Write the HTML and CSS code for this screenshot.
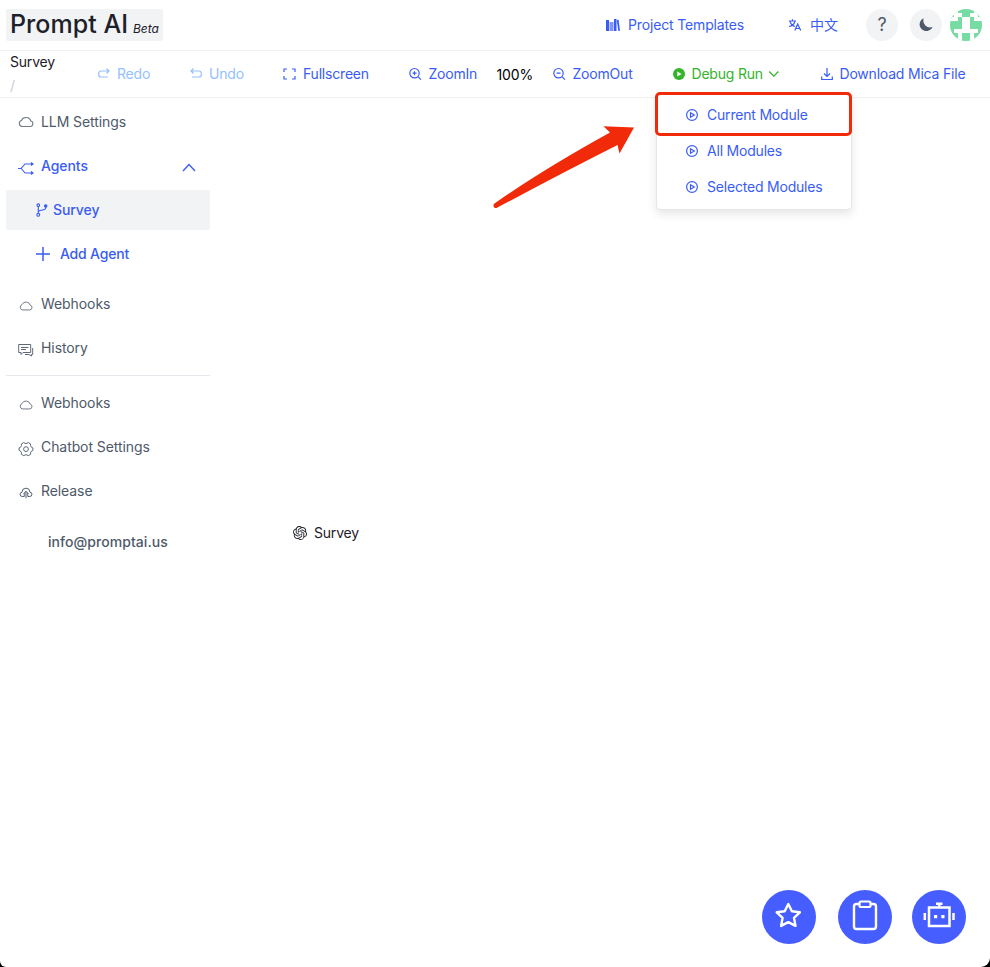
FILE: index.html
```html
<!DOCTYPE html>
<html lang="en">
<head>
<meta charset="utf-8">
<title>Prompt AI</title>
<link rel="stylesheet" href="styles.css">
</head>
<body>
<svg class="defs" aria-hidden="true">
  <symbol id="cloud" viewBox="0 0 16 16"><path d="M4.200 12.500h8a2.800 2.800 0 0 0 .6-5.500A5 5 0 0 0 3.400 6.500 3.100 3.100 0 0 0 4.200 12.500Z"/></symbol>
  <symbol id="play" viewBox="0 0 14 14"><circle cx="7" cy="7" r="5.4"/><path d="M5.5 4.7v4.6L9.3 7Z"/></symbol>
</svg>
<div class="page">
  <header class="header">
    <div class="logo"><span class="name">Prompt AI</span><em>Beta</em></div>
    <nav class="top-nav">
      <a class="templates"><svg width="14" height="14" viewBox="0 0 14 14"><path d="M0 2h3v11H0zM8 1h2.5v12H8z" fill="currentColor"/><path d="M3.5 4h4v9h-4z" fill="currentColor" opacity=".65"/><path d="m10.800 2 1.800-.3L14 12.800l-1.700.2Z" fill="currentColor"/></svg>Project Templates</a>
      <a class="language"><svg width="14" height="14" viewBox="0 0 14 14" class="line"><path d="M1 3h7M4.500 1.300V3M2 3.500c1 3 3 4.500 5 5M7 3.500c-1 3-3 4.500-6 5M6.800 12.500 9.700 6l3 6.500M8 10.500h3.500"/></svg>中文</a>
      <button class="round help">?</button>
      <button class="round moon"><svg width="16" height="16" viewBox="0 0 16 16"><path d="M5.800 1.200A6.700 6.700 0 1 0 14.500 10 6.800 6.800 0 0 1 5.800 1.200Z" fill="currentColor"/></svg></button>
      <svg class="avatar" width="32" height="32" viewBox="0 0 8 8" shape-rendering="crispEdges"><path d="M0 0h8v8H0z" fill="#76dca3"/><path d="M0 0h2v1H0zM6 0h2v1H6zM1 1h2v1H1zM5 1h2v1H5zM0 2h2v1H0zM6 2h2v1H6zM3 2h2v3H3zM1 5h6v1H1zM2 6h1v2H2zM5 6h1v2H5z" fill="#fff"/></svg>
    </nav>
  </header>
  <div class="toolbar">
    <div class="crumb">Survey<span>/</span></div>
    <a class="off"><svg width="12" height="14" viewBox="0 0 12 14" class="line"><path d="M11 4H3a2.300 2.300 0 0 0-2.300 2.300v1.400A2.300 2.300 0 0 0 3 10h7M8.500 1.500 11 4 8.500 6.500"/></svg>Redo</a>
    <a class="off"><svg width="12" height="14" viewBox="0 0 12 14" class="line"><path d="M1 4h8a2.300 2.300 0 0 1 2.300 2.300v1.400A2.300 2.300 0 0 1 9 10H2M3.500 1.500 1 4l2.500 2.500"/></svg>Undo</a>
    <a><svg width="13" height="14" viewBox="0 0 13 14" class="line"><path d="M4 2H1v3M9 2h3v3M1 9v3h3M12 9v3H9"/></svg>Fullscreen</a>
    <a><svg width="13" height="14" viewBox="0 0 13 14" class="line"><circle cx="5.5" cy="6.2" r="4.7"/><path d="m9 9.700 3 3M3.500 6.200h4M5.500 4.200v4"/></svg>ZoomIn</a>
    <div class="percent">100%</div>
    <a><svg width="13" height="14" viewBox="0 0 13 14" class="line"><circle cx="5.5" cy="6.2" r="4.7"/><path d="m9 9.700 3 3M3.500 6.200h4"/></svg>ZoomOut</a>
    <a class="debug"><svg width="12" height="14" viewBox="0 0 12 14"><circle cx="6" cy="7" r="6" fill="currentColor"/><path d="M4.300 4.400v5.200L8.600 7Z" fill="#fff"/></svg>Debug Run<svg class="caret line" width="12" height="12" viewBox="0 0 12 12"><path d="m1.300 3.500 4.500 4.700 4.500-4.700"/></svg></a>
    <a><svg width="12" height="14" viewBox="0 0 12 14" class="line"><path d="M6 1v8M3 6.500l3 3 3-3M.7 9.500v3h10.600v-3"/></svg>Download Mica File</a>
  </div>
  <div class="body">
    <aside class="sidebar">
      <a class="item"><svg class="icon soft" width="16" height="16"><use href="#cloud"/></svg>LLM Settings</a>
      <a class="item active"><svg class="icon low" width="16" height="16" viewBox="0 0 16 16"><path d="M0 8.500h3l4-4.500h8M13 2.500l2 1.500-2 1.500M3.300 8.500 7 13h8M13 11.500l2 1.500-2 1.500"/></svg>Agents<svg class="fold" width="14" height="14" viewBox="0 0 14 14"><path d="m1 10 6-6.500 6 6.500"/></svg></a>
      <a class="item sub active selected"><svg class="icon" width="12" height="14" viewBox="0 0 12 14"><path d="M2.300 3.500v7M2.300 9c0-1.200 1.200-1.500 3.200-1.800C8.400 6.800 9.700 6.400 9.700 5V3.800"/><circle cx="2.3" cy="2.2" r="1.3"/><circle cx="2.3" cy="11.8" r="1.4"/><circle cx="9.7" cy="3" r="1.2" fill="currentColor"/></svg>Survey</a>
      <a class="item sub add active"><svg class="icon" width="14" height="14" viewBox="0 0 14 14"><path d="M7 0v14M0 7h14"/></svg>Add Agent</a>
      <a class="item after"><svg class="icon low thin small" width="14" height="14"><use href="#cloud"/></svg>Webhooks</a>
      <a class="item"><svg class="icon low thin" width="16" height="16" viewBox="0 0 16 16"><path d="M.7 2.500h12v8H5L3 12.500v-2H.7ZM3 5.500h7.500M3 7.500h5M14.700 6v6.500h-1.200V14L11 12.500H7"/></svg>History</a>
      <hr>
      <a class="item"><svg class="icon low thin small" width="14" height="14"><use href="#cloud"/></svg>Webhooks</a>
      <a class="item"><svg class="icon low thin" width="16" height="16" viewBox="0 0 16 16"><path d="M5.800 1.500 7 2.400h2l1.200-.9 2.500 1.500-.2 1.500 1 1.800 1.400.6v2.500l-1.400.7-1 1.700.2 1.500-2.500 1.400L9 13.900H7l-1.200.8-2.500-1.400.2-1.500-1-1.700-1.400-.7V6.900l1.400-.6 1-1.800L3.300 3Z"/><circle cx="8" cy="8.1" r="2.4"/></svg>Chatbot Settings</a>
      <a class="item"><svg class="icon low small" width="14" height="14" viewBox="0 0 16 16"><path d="M6 12H4a2.500 2.500 0 0 1-.5-5 4.500 4.500 0 0 1 9 0 2.500 2.500 0 0 1-.5 5h-2M8 14V6M5.500 8.500 8 6l2.500 2.500M6 8v4M10 8v4"/></svg>Release</a>
      <a class="mail">info@promptai.us</a>
    </aside>
    <main class="canvas">
      <div class="node"><svg width="14" height="14" viewBox="0 0 24 24"><path fill="currentColor" d="M22.280 9.820a5.980 5.980 0 0 0-.51-4.910 6.050 6.050 0 0 0-6.510-2.900A6.070 6.070 0 0 0 4.980 4.180a5.980 5.980 0 0 0-4 2.900 6.050 6.050 0 0 0 .74 7.100 5.980 5.980 0 0 0 .51 4.910 6.050 6.050 0 0 0 6.520 2.900A5.980 5.980 0 0 0 13.260 24a6.060 6.060 0 0 0 5.770-4.210 5.990 5.990 0 0 0 4-2.900 6.060 6.060 0 0 0-.75-7.070zm-9.020 12.610a4.480 4.480 0 0 1-2.880-1.040l.14-.08 4.780-2.760a.8.8 0 0 0 .39-.68v-6.740l2.020 1.170.04.05v5.580a4.500 4.500 0 0 1-4.490 4.500zM3.600 18.300a4.470 4.470 0 0 1-.54-3.010l.14.08 4.780 2.760a.77.77 0 0 0 .78 0l5.840-3.370v2.330l-.03.06-4.830 2.790A4.500 4.500 0 0 1 3.600 18.300zM2.340 7.900a4.490 4.490 0 0 1 2.370-1.980V11.600a.77.77 0 0 0 .39.68l5.810 3.350-2.020 1.170h-.07l-4.830-2.790A4.500 4.500 0 0 1 2.340 7.900zm16.600 3.860L13.100 8.360l2.020-1.160h.07l4.830 2.790a4.490 4.490 0 0 1-.68 8.100v-5.680a.79.79 0 0 0-.4-.65zm2.010-3.020-.14-.09-4.770-2.780a.78.78 0 0 0-.79 0L9.410 9.230V6.900l.03-.06 4.830-2.790a4.500 4.500 0 0 1 6.680 4.660zM8.310 12.860 6.290 11.700l-.04-.06V6.070a4.500 4.500 0 0 1 7.380-3.450l-.14.08L8.700 5.460a.8.8 0 0 0-.39.68zm1.100-2.360L12 9l2.610 1.500v3L12 15l-2.610-1.500z"/></svg>Survey</div>
    </main>
  </div>
  <div class="menu">
    <a><svg width="14" height="14"><use href="#play"/></svg>Current Module</a>
    <a><svg width="14" height="14"><use href="#play"/></svg>All Modules</a>
    <a><svg width="14" height="14"><use href="#play"/></svg>Selected Modules</a>
    <div class="highlight"></div>
  </div>
  <svg class="arrow" width="144" height="86" viewBox="0 0 144 86"><path d="M1.800 80 Q50 46 118 8.500L111.500 2.300 142 3.500 127.500 29.500 125.500 21 Q72 48 4.500 84 Q.5 84 1.800 80Z" fill="#f12a0a"/></svg>
  <div class="floating">
    <button><svg width="32" height="32" viewBox="0 0 32 32"><path d="m15.300 4 3.600 7.300 8 1-5.900 5.600 1.500 8-7.200-3.800-7.200 3.800 1.500-8-5.900-5.600 8-1Z" stroke-width="2.4" stroke-linejoin="round"/></svg></button>
    <button><svg width="32" height="34" viewBox="0 0 32 34"><rect x="5" y="5" width="22" height="25" rx="2.5" stroke-width="2.4"/><rect x="10.5" y="2.5" width="11" height="5.5" rx="1.5" stroke-width="2.2" fill="#465eff"/></svg></button>
    <button><svg width="32" height="32" viewBox="0 0 32 32"><path d="M6 7.500h20.500V26H6ZM16.300 3.500v4M13 3.700h6.500M1.800 13v7M30.500 13v7" stroke-width="2.5"/><path d="M11 15h3.200v3.200H11zM18.300 15h3.200v3.200h-3.200z" fill="#fff" stroke="none"/></svg></button>
  </div>
</div>
</body>
</html>
```
FILE: styles.css
```css
* { box-sizing: border-box; }
html { background: #000; }
body { margin: 0; font: 14px/20px Inter, "Noto Sans CJK SC", sans-serif; letter-spacing: -.2px; color: #1d2129; }
.defs { position: absolute; width: 0; height: 0; }
.page { position: relative; height: 967px; overflow: hidden; background: #fff; border-radius: 0 0 9px 6px; display: flex; flex-direction: column; }
button { border: 0; padding: 0; font: inherit; }
svg { flex: none; }
.line { fill: none; stroke: currentColor; stroke-width: 1.2; }

.header { height: 51px; border-bottom: 1px solid #f0f0f1; display: flex; align-items: center; justify-content: space-between; padding: 0 8px 0 6px; }
.logo { width: 157px; height: 32px; background: #f2f3f5; border-radius: 2px; display: flex; align-items: baseline; padding-left: 4px; }
.logo .name { font-size: 25px; font-weight: 500; line-height: 31px; width: 123px; white-space: nowrap; letter-spacing: .05px; }
.logo em { font-size: 12px; letter-spacing: 0; }
.top-nav { display: flex; align-items: center; color: #3a5cf5; }
.top-nav a { display: flex; align-items: center; gap: 8px; white-space: nowrap; }
.templates { width: 182px; letter-spacing: -.15px; }
.language { width: 78px; letter-spacing: 0; }
.round { width: 32px; height: 32px; border-radius: 50%; background: #f2f3f5; color: #4e5969; display: flex; align-items: center; justify-content: center; margin-right: 12px; }
.help { font-size: 18px; }
.moon { margin-right: 8px; }
.avatar { border-radius: 50%; }

.toolbar { height: 47px; border-bottom: 1px solid #f0f0f1; padding-left: 10px; display: grid; grid-template-columns: 88px 92px 93px 125.5px 88px 56px 120px 148px 1fr; grid-template-rows: 46px; align-items: center; color: #3a5cf5; white-space: nowrap; }
.toolbar a { display: flex; align-items: center; gap: 7px; }
.toolbar .off { color: #94bfff; }
.crumb { color: #1d2129; line-height: 24px; height: 48px; }
.crumb span { display: block; color: #c9cdd4; }
.percent { color: #000; letter-spacing: -.1px; padding-top: 2px; }
.toolbar .debug { color: #35b32b; }
.debug .caret { margin-left: -2px; }

.body { flex: 1; display: flex; }
.sidebar { width: 210px; padding: 4px 0 0 6px; color: #4e5969; letter-spacing: -.08px; }
.item { height: 40px; margin-bottom: 4px; padding-left: 12px; display: flex; align-items: center; }
.icon { margin-right: 7px; fill: none; stroke: currentColor; stroke-width: 1.1; }
.low { position: relative; top: 2px; }
.thin { stroke-width: .9; }
.small { margin-left: 1px; margin-right: 8px; }
.soft { opacity: .8; }
.active { color: #3a5cf5; font-weight: 500; }
.fold { margin: 3px 14px 0 auto; fill: none; stroke: currentColor; stroke-width: 1.4; }
.sub { padding-left: 30px; }
.sub .icon { margin-right: 5px; }
.add { letter-spacing: -.2px; }
.add .icon { margin-right: 10px; stroke-width: 1.5; }
.selected { background: #f2f3f5; border-radius: 2px; }
.after { margin-top: 10px; }
hr { border: 0; border-top: 1px solid #e5e6eb; margin: 7px 0; }
.mail { display: block; padding: 17px 0 0 42px; font-weight: 500; letter-spacing: .05px; }
.canvas { flex: 1; padding: 425px 0 0 83px; }
.node { display: flex; gap: 7px; align-items: center; }
.node svg { margin-bottom: 1px; }

.menu { position: absolute; left: 656px; top: 92px; width: 196px; height: 118px; padding: 4px 0 0 28px; background: #fff; border: 1px solid #e5e6eb; border-radius: 4px; box-shadow: 0 4px 10px rgba(0,0,0,.1); color: #3a5cf5; }
.menu a { height: 36px; display: flex; align-items: center; gap: 8px; }
.menu svg { fill: none; stroke: currentColor; stroke-width: 1.2; }
.highlight { position: absolute; left: -2px; top: -1px; width: 197px; height: 44px; border: 3px solid #f12a0a; border-radius: 5px; }
.arrow { position: absolute; left: 492px; top: 124px; }
.floating { position: absolute; right: 24px; bottom: 23px; display: flex; }
.floating button { width: 54px; height: 54px; border-radius: 50%; background: #465eff; display: grid; place-items: center; margin-left: 20px; }
.floating button:nth-child(2) { margin-left: 22px; }
.floating svg { fill: none; stroke: #fff; margin-bottom: 3px; }
```
